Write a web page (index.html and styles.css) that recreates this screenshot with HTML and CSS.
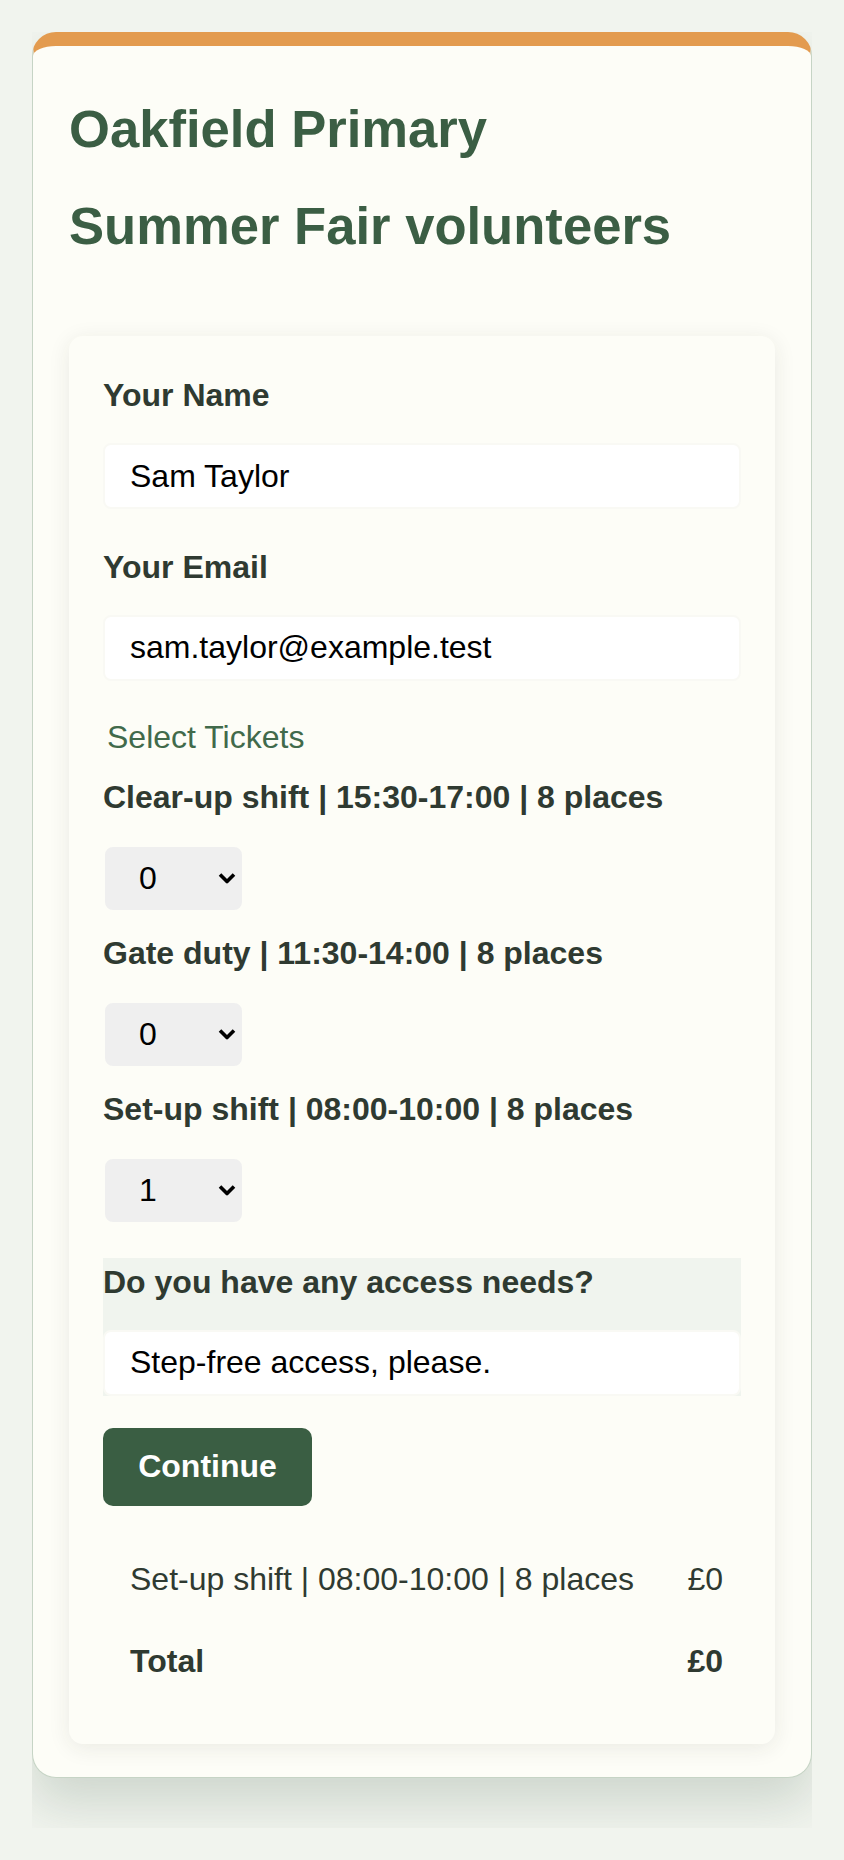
FILE: index.html
```html
<!DOCTYPE html>
<html lang="en">
<head>
<meta charset="utf-8">
<title>Oakfield Primary – Summer Fair volunteers</title>
<link rel="stylesheet" href="styles.css">
</head>
<body>
<div class="shell">
  <main class="card">
    <header class="card-head">
      <h1 class="title">Oakfield Primary</h1>
      <h2 class="subtitle">Summer Fair volunteers</h2>
    </header>
    <section class="panel">
      <form class="signup">
        <label class="field-label" for="name">Your Name</label>
        <input class="text-input gap-after" id="name" type="text" value="Sam Taylor">
        <label class="field-label" for="email">Your Email</label>
        <input class="text-input" id="email" type="email" value="sam.taylor@example.test">
        <fieldset class="tickets">
          <legend class="tickets-legend">Select Tickets</legend>
          <div class="ticket">
            <label class="field-label" for="t1">Clear-up shift | 15:30-17:00 | 8 places</label>
            <div class="qty-wrap">
              <select class="qty" id="t1">
                <option selected>0</option><option>1</option><option>2</option><option>3</option><option>4</option><option>5</option><option>6</option><option>7</option><option>8</option>
              </select>
              <svg class="chevron" viewBox="0 0 18 11" width="18" height="11" aria-hidden="true"><path d="M2 2 L9 9 L16 2" fill="none" stroke="#000" stroke-width="3.6"/></svg>
            </div>
          </div>
          <div class="ticket">
            <label class="field-label" for="t2">Gate duty | 11:30-14:00 | 8 places</label>
            <div class="qty-wrap">
              <select class="qty" id="t2">
                <option selected>0</option><option>1</option><option>2</option><option>3</option><option>4</option><option>5</option><option>6</option><option>7</option><option>8</option>
              </select>
              <svg class="chevron" viewBox="0 0 18 11" width="18" height="11" aria-hidden="true"><path d="M2 2 L9 9 L16 2" fill="none" stroke="#000" stroke-width="3.6"/></svg>
            </div>
          </div>
          <div class="ticket">
            <label class="field-label" for="t3">Set-up shift | 08:00-10:00 | 8 places</label>
            <div class="qty-wrap">
              <select class="qty" id="t3">
                <option>0</option><option selected>1</option><option>2</option><option>3</option><option>4</option><option>5</option><option>6</option><option>7</option><option>8</option>
              </select>
              <svg class="chevron" viewBox="0 0 18 11" width="18" height="11" aria-hidden="true"><path d="M2 2 L9 9 L16 2" fill="none" stroke="#000" stroke-width="3.6"/></svg>
            </div>
          </div>
        </fieldset>
        <div class="access">
          <label class="field-label" for="access">Do you have any access needs?</label>
          <input class="text-input" id="access" type="text" value="Step-free access, please.">
        </div>
        <button class="continue" type="button">Continue</button>
      </form>
      <div class="summary">
        <div class="summary-row">
          <span>Set-up shift | 08:00-10:00 | 8 places</span>
          <span>£0</span>
        </div>
        <div class="summary-row summary-total">
          <span>Total</span>
          <span>£0</span>
        </div>
      </div>
    </section>
  </main>
</div>
</body>
</html>
```

FILE: styles.css
```css
* {
  box-sizing: border-box;
}

html,
body {
  margin: 0;
}

body {
  background: #f1f4ee;
  font-family: "Liberation Sans", Arial, sans-serif;
  color: #2f3a31;
}

.shell {
  margin: 32px 32px 0;
  padding-bottom: 50px;
  overflow: hidden;
}

.card {
  display: block;
  background: #fdfdf7;
  border: 1px solid #c6d4c5;
  border-top: 14px solid #e39b4f;
  border-radius: 24px;
  padding: 0 36px 33px;
  box-shadow: 0 26px 50px rgba(70, 100, 80, 0.2);
}

.card-head {
  padding-top: 52px;
  margin-bottom: 80px;
}

.title,
.subtitle {
  margin: 0;
  font-size: 52.6px;
  font-weight: 700;
  line-height: normal;
  color: #3b5e44;
}

.subtitle {
  margin-top: 36px;
}

.panel {
  background: #fdfdf7;
  border-radius: 14px;
  padding: 41px 34px 42px;
  box-shadow: 0 4px 22px rgba(40, 40, 30, 0.09);
}

.signup {
  margin: 0;
}

.field-label {
  display: block;
  font-size: 32px;
  font-weight: 700;
  line-height: normal;
  color: #2f3a31;
  margin-bottom: 29px;
}

.text-input {
  display: block;
  width: 100%;
  height: 66px;
  margin: 0;
  padding: 0 25px;
  border: 2px solid #f9f9f4;
  border-radius: 8px;
  background: #ffffff;
  color: #000000;
  font-family: "Liberation Sans", Arial, sans-serif;
  font-size: 32px;
  outline: none;
}

.gap-after {
  margin-bottom: 39.5px;
}

.tickets {
  margin: 38px 0 0;
  padding: 0;
  border: 0;
  min-width: 0;
}

.tickets-legend {
  padding: 0 4px;
  font-size: 32px;
  font-weight: 400;
  line-height: normal;
  color: #416a4b;
}

.ticket {
  margin-top: 23px;
}

.qty-wrap {
  position: relative;
  width: 141px;
}

.qty {
  display: block;
  width: 141px;
  height: 67px;
  margin: 0;
  padding: 0 30px 0 34px;
  border: 2px solid #fdfdf7;
  border-radius: 10px;
  background-color: #efefef;
  color: #000000;
  font-family: "Liberation Sans", Arial, sans-serif;
  font-size: 32px;
  -webkit-appearance: none;
  appearance: none;
}

.chevron {
  position: absolute;
  right: 8px;
  top: 50%;
  transform: translateY(-50%);
  pointer-events: none;
}

.access {
  margin-top: 34px;
  padding-top: 6px;
  background: #f0f4ee;
}

.continue {
  display: block;
  margin-top: 32px;
  width: 209px;
  height: 78px;
  padding: 0 35px;
  border: 0;
  border-radius: 10px;
  background: #3a5e43;
  color: #ffffff;
  font-family: "Liberation Sans", Arial, sans-serif;
  font-size: 32px;
  font-weight: 700;
}

.summary {
  margin-top: 32.5px;
}

.summary-row {
  display: flex;
  justify-content: space-between;
  padding: 22.5px 18px 22.5px 27px;
  font-size: 32px;
  line-height: normal;
  color: #2f3a31;
}

.summary-total {
  font-weight: 700;
}
```
